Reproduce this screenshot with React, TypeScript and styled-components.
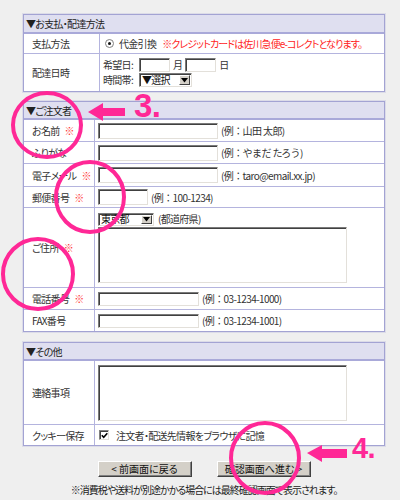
import styled, { createGlobalStyle } from "styled-components";

const GlobalStyle = createGlobalStyle`
  html, body {
    margin: 0;
    padding: 0;
    background: #efefef;
  }
  body {
    font-family: "Noto Sans CJK JP", "Noto Sans", sans-serif;
    font-size: 10px;
    letter-spacing: -0.7px;
    color: #333;
  }
`;

const Page = styled.div`
  position: relative;
  width: 400px;
  height: 500px;
  box-sizing: border-box;
  padding: 14px 15px 0 23px;
  display: flex;
  flex-direction: column;
  font-feature-settings: "palt";
  white-space: nowrap;
  overflow: hidden;
`;

const Section = styled.section<{ $gap: number }>`
  margin-top: ${(p) => p.$gap}px;
  background: #fff;
  border: 1px solid #a3a3d3;
  box-shadow: 0 0 0 1px #dcdce8;
`;

const SectionHead = styled.div<{ $h: number }>`
  height: ${(p) => p.$h}px;
  background: #dfdff0;
  border-bottom: 2px solid #a9a9d9;
  padding-left: 2px;
  display: flex;
  align-items: center;
  color: #222;
`;

const Row = styled.div<{ $label: number; $h: number }>`
  display: grid;
  grid-template-columns: ${(p) => p.$label}px 1fr;
  height: ${(p) => p.$h}px;
  & + & {
    border-top: 1px solid #b4b4de;
  }
`;

const Label = styled.div`
  box-sizing: border-box;
  border-right: 1px solid #b4b4de;
  padding-left: 8px;
  display: flex;
  align-items: center;
`;

const Value = styled.div<{ $column?: boolean }>`
  min-width: 0;
  padding: ${(p) => (p.$column ? "4px 3px" : "0 3px")};
  display: flex;
  flex-direction: ${(p) => (p.$column ? "column" : "row")};
  align-items: ${(p) => (p.$column ? "flex-start" : "center")};
  gap: ${(p) => (p.$column ? "1px" : "3px")};
`;

const Line = styled.div<{ $gap?: number }>`
  height: 14px;
  line-height: 1;
  display: flex;
  align-items: center;
  gap: ${(p) => p.$gap ?? 3}px;
`;

const Required = styled.span`
  color: #ff3333;
  margin-left: 5px;
`;

const Notice = styled.span`
  color: #ff2222;
  margin-left: 3px;
  letter-spacing: -0.9px;
`;

const Hint = styled.span`
  font-feature-settings: normal;
  letter-spacing: -0.6px;
`;

const FieldCaption = styled.span`
  width: 33px;
`;

const TextInput = styled.input<{ $w: number; $h?: number }>`
  box-sizing: border-box;
  width: ${(p) => p.$w}px;
  height: ${(p) => p.$h ?? 16}px;
  margin: 0;
  padding: 0 2px;
  background: #fff;
  border: 1px solid;
  border-color: #7a7a7a #e3e0da #e3e0da #7a7a7a;
  box-shadow: inset 1px 1px 0 #404040;
  font: inherit;
`;

const TextArea = styled.textarea<{ $w: number; $h: number }>`
  box-sizing: border-box;
  width: ${(p) => p.$w}px;
  height: ${(p) => p.$h}px;
  margin: 0;
  padding: 2px;
  resize: none;
  background: #fff;
  border: 1px solid;
  border-color: #7a7a7a #e3e0da #e3e0da #7a7a7a;
  box-shadow: inset 1px 1px 0 #404040;
  font: inherit;
`;

const SelectBox = styled.div<{ $w: number; $h: number }>`
  box-sizing: border-box;
  width: ${(p) => p.$w}px;
  height: ${(p) => p.$h}px;
  display: flex;
  align-items: stretch;
  background: #fff;
  border: 1px solid;
  border-color: #7a7a7a #e3e0da #e3e0da #7a7a7a;
  box-shadow: inset 1px 1px 0 #404040;
  color: #111;
`;

const SelectText = styled.span`
  flex: 1;
  display: flex;
  align-items: center;
  padding-left: 2px;
  line-height: 1;
`;

const SelectButton = styled.span`
  box-sizing: border-box;
  width: 11px;
  margin: 1px 1px 1px 0;
  background: #d4d0c8;
  border: 1px solid;
  border-color: #fff #404040 #404040 #fff;
  display: flex;
  align-items: center;
  justify-content: center;
`;

const Radio = styled.span`
  box-sizing: border-box;
  width: 9px;
  height: 9px;
  margin: 0 2px 0 2px;
  border-radius: 50%;
  border: 1px solid #808080;
  background: #fff;
  display: inline-flex;
  align-items: center;
  justify-content: center;
  &::after {
    content: "";
    width: 3px;
    height: 3px;
    border-radius: 50%;
    background: #111;
  }
`;

const CheckBox = styled.span`
  box-sizing: border-box;
  width: 10px;
  height: 10px;
  margin: 0 4px 0 1px;
  border: 1px solid;
  border-color: #808080 #e3e0da #e3e0da #808080;
  box-shadow: inset 1px 1px 0 #404040;
  background: #fff;
  display: inline-flex;
  align-items: center;
  justify-content: center;
`;

const Buttons = styled.div`
  margin-top: 15px;
  display: flex;
  justify-content: center;
  gap: 25px;
`;

const Button = styled.button`
  box-sizing: border-box;
  width: 94px;
  height: 16px;
  margin: 0;
  padding: 0;
  background: #d4d0c8;
  border: 1px solid;
  border-color: #fff #404040 #404040 #fff;
  box-shadow: inset -1px -1px 0 #808080;
  font: inherit;
  color: #111;
  line-height: 1;
`;

const Footnote = styled.p`
  margin: 5px 0 0;
  text-align: center;
  color: #222;
  letter-spacing: -1px;
`;

const Overlay = styled.svg`
  position: absolute;
  left: 0;
  top: 0;
  pointer-events: none;
`;

const Arrow = () => (
  <svg width="7" height="5" viewBox="0 0 7 5">
    <path d="M0 0 H7 L3.5 4.5 Z" fill="#000" />
  </svg>
);

const Check = () => (
  <svg width="7" height="7" viewBox="0 0 7 7">
    <path d="M0.8 3.2 L2.7 5.2 L6.3 1.2" stroke="#000" strokeWidth="1.6" fill="none" />
  </svg>
);

const Select = ({ w, h, text }: { w: number; h: number; text: string }) => (
  <SelectBox $w={w} $h={h}>
    <SelectText>{text}</SelectText>
    <SelectButton>
      <Arrow />
    </SelectButton>
  </SelectBox>
);

const pink = "#ff2896";

const Annotations = () => (
  <Overlay width="400" height="500" viewBox="0 0 400 500">
    <g fill="none" stroke={pink} strokeWidth="4">
      <ellipse cx="47" cy="125" rx="34" ry="32" />
      <ellipse cx="90" cy="197" rx="34" ry="35" />
      <ellipse cx="38" cy="274" rx="35" ry="35" />
      <ellipse cx="265" cy="458" rx="34" ry="35" />
    </g>
    <g fill={pink}>
      <polygon points="88,112 103,103 103,108 125,108 125,116 103,116 103,121" />
      <polygon points="307,453 322,445 322,449 347,449 347,458 322,458 322,462" />
    </g>
    <g fill={pink} fontFamily="'Liberation Sans', Arial, sans-serif" fontWeight="bold">
      <text x="134" y="117" fontSize="33">3.</text>
      <text x="352" y="458" fontSize="29">4.</text>
    </g>
  </Overlay>
);

export default function App() {
  return (
    <>
      <GlobalStyle />
      <Page>
        <Section $gap={0}>
          <SectionHead $h={17}>▼お支払・配達方法</SectionHead>
          <Row $label={76} $h={19}>
            <Label>支払方法</Label>
            <Value>
              <Radio />
              代金引換
              <Notice>※クレジットカードは佐川急便e-コレクトとなります。</Notice>
            </Value>
          </Row>
          <Row $label={76} $h={37}>
            <Label>配達日時</Label>
            <Value $column>
              <Line>
                <FieldCaption>希望日:</FieldCaption>
                <TextInput $w={31} $h={14} />
                月
                <TextInput $w={31} $h={14} />
                日
              </Line>
              <Line>
                <FieldCaption>時間帯:</FieldCaption>
                <Select w={53} h={14} text="▼選択" />
              </Line>
            </Value>
          </Row>
        </Section>

        <Section $gap={9}>
          <SectionHead $h={16}>▼ご注文者</SectionHead>
          <Row $label={71} $h={21}>
            <Label>
              お名前<Required>※</Required>
            </Label>
            <Value>
              <TextInput $w={120} />
              <Hint>(例：山田 太郎)</Hint>
            </Value>
          </Row>
          <Row $label={71} $h={21}>
            <Label>ふりがな</Label>
            <Value>
              <TextInput $w={120} />
              <Hint>(例：やまだ たろう)</Hint>
            </Value>
          </Row>
          <Row $label={71} $h={22}>
            <Label>
              電子メール<Required>※</Required>
            </Label>
            <Value>
              <TextInput $w={120} />
              <Hint>(例：taro@email.xx.jp)</Hint>
            </Value>
          </Row>
          <Row $label={71} $h={20}>
            <Label>
              郵便番号<Required>※</Required>
            </Label>
            <Value>
              <TextInput $w={50} />
              <Hint>(例：100-1234)</Hint>
            </Value>
          </Row>
          <Row $label={71} $h={79}>
            <Label>
              ご住所<Required>※</Required>
            </Label>
            <Value $column>
              <Line $gap={4}>
                <Select w={56} h={13} text="東京都" />
                (都道府県)
              </Line>
              <TextArea $w={249} $h={56} />
            </Value>
          </Row>
          <Row $label={71} $h={21}>
            <Label>
              電話番号<Required>※</Required>
            </Label>
            <Value>
              <TextInput $w={101} $h={14} />
              <Hint>(例：03-1234-1000)</Hint>
            </Value>
          </Row>
          <Row $label={71} $h={21}>
            <Label>FAX番号</Label>
            <Value>
              <TextInput $w={101} $h={14} />
              <Hint>(例：03-1234-1001)</Hint>
            </Value>
          </Row>
        </Section>

        <Section $gap={10}>
          <SectionHead $h={16}>▼その他</SectionHead>
          <Row $label={71} $h={63}>
            <Label>連絡事項</Label>
            <Value>
              <TextArea $w={249} $h={56} />
            </Value>
          </Row>
          <Row $label={71} $h={20}>
            <Label>クッキー保存</Label>
            <Value>
              <CheckBox>
                <Check />
              </CheckBox>
              注文者・配送先情報をブラウザに記憶
            </Value>
          </Row>
        </Section>

        <Buttons>
          <Button type="button">&lt; 前画面に戻る</Button>
          <Button type="button">確認画面へ進む &gt;</Button>
        </Buttons>
        <Footnote>※消費税や送料が別途かかる場合には最終確認画面で表示されます。</Footnote>
        <Annotations />
      </Page>
    </>
  );
}
